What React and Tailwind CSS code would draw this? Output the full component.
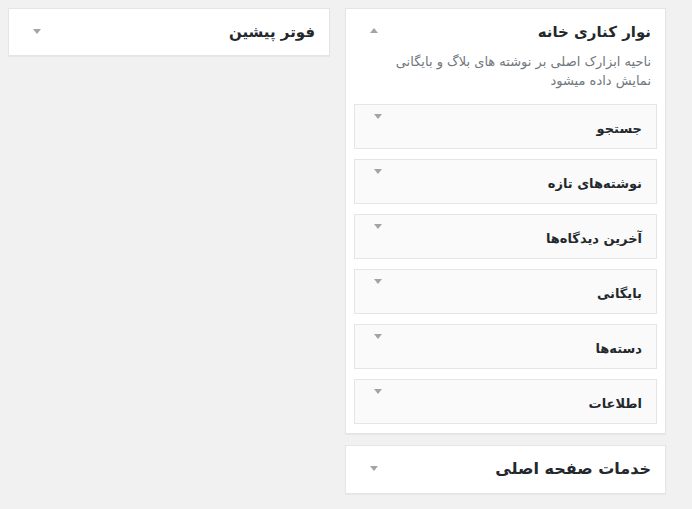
const widgets = ["جستجو", "نوشته‌های تازه", "آخرین دیدگاه‌ها", "بایگانی", "دسته‌ها", "اطلاعات"];

function Arrow({ up }) {
  return (
    <span
      className={`block w-0 h-0 border-l-[4px] border-r-[4px] border-l-transparent border-r-transparent ${
        up ? "border-b-[5px] border-b-[#a0a5aa]" : "border-t-[5px] border-t-[#a0a5aa]"
      }`}
    />
  );
}

function SidebarBox({ title, className = "", titleClass = "text-[15px] mt-[12px]" }) {
  return (
    <div className={`bg-white border border-[#e5e5e5] shadow-[0_1px_1px_rgba(0,0,0,0.04)] h-[48px] flex items-start justify-between px-[14px] ${className}`}>
      <h2 className={`font-bold text-[#23282d] ${titleClass}`}>{title}</h2>
      <span className="flex mt-[20px] ml-[10px]">
        <Arrow />
      </span>
    </div>
  );
}

export default function App() {
  return (
    <div
      dir="rtl"
      className="w-[692px] h-[509px] bg-[#f1f1f1] flex gap-[15px] pt-[8px] pr-[26px]"
      style={{ fontFamily: "Tahoma, 'DejaVu Sans', sans-serif" }}
    >
      <div className="w-[321px] flex flex-col">
        <div className="bg-white border border-[#e5e5e5] shadow-[0_1px_1px_rgba(0,0,0,0.04)] pt-[12px] pb-[9px] px-[8px]">
          <div className="flex items-start justify-between pr-[6px]">
            <h2 className="text-[15px] font-bold text-[#23282d]">نوار کناری خانه</h2>
            <span className="flex mt-[7px] ml-[16px]">
              <Arrow up />
            </span>
          </div>
          <p className="text-[13px] leading-[19px] text-[#72777c] pr-[6px] pl-[30px] mt-[8px]">
            ناحیه ابزارک اصلی بر نوشته های بلاگ و بایگانی نمایش داده میشود
          </p>
          <div className="flex flex-col gap-[10px] mt-[14px]">
            {widgets.map((w) => (
              <div key={w} className="h-[45px] bg-[#fafafa] border border-[#e5e5e5] flex items-start justify-between pr-[14px] pl-[19px]">
                <h3 className="text-[13px] font-bold text-[#23282d] mt-[14px]">{w}</h3>
                <span className="flex mt-[9px]">
                  <Arrow />
                </span>
              </div>
            ))}
          </div>
        </div>
        <SidebarBox title="خدمات صفحه اصلی" className="mt-[11px] h-[49px]" titleClass="text-[16px] mt-[11px]" />
      </div>
      <div className="w-[322px]">
        <SidebarBox title="فوتر پیشین" />
      </div>
    </div>
  );
}
